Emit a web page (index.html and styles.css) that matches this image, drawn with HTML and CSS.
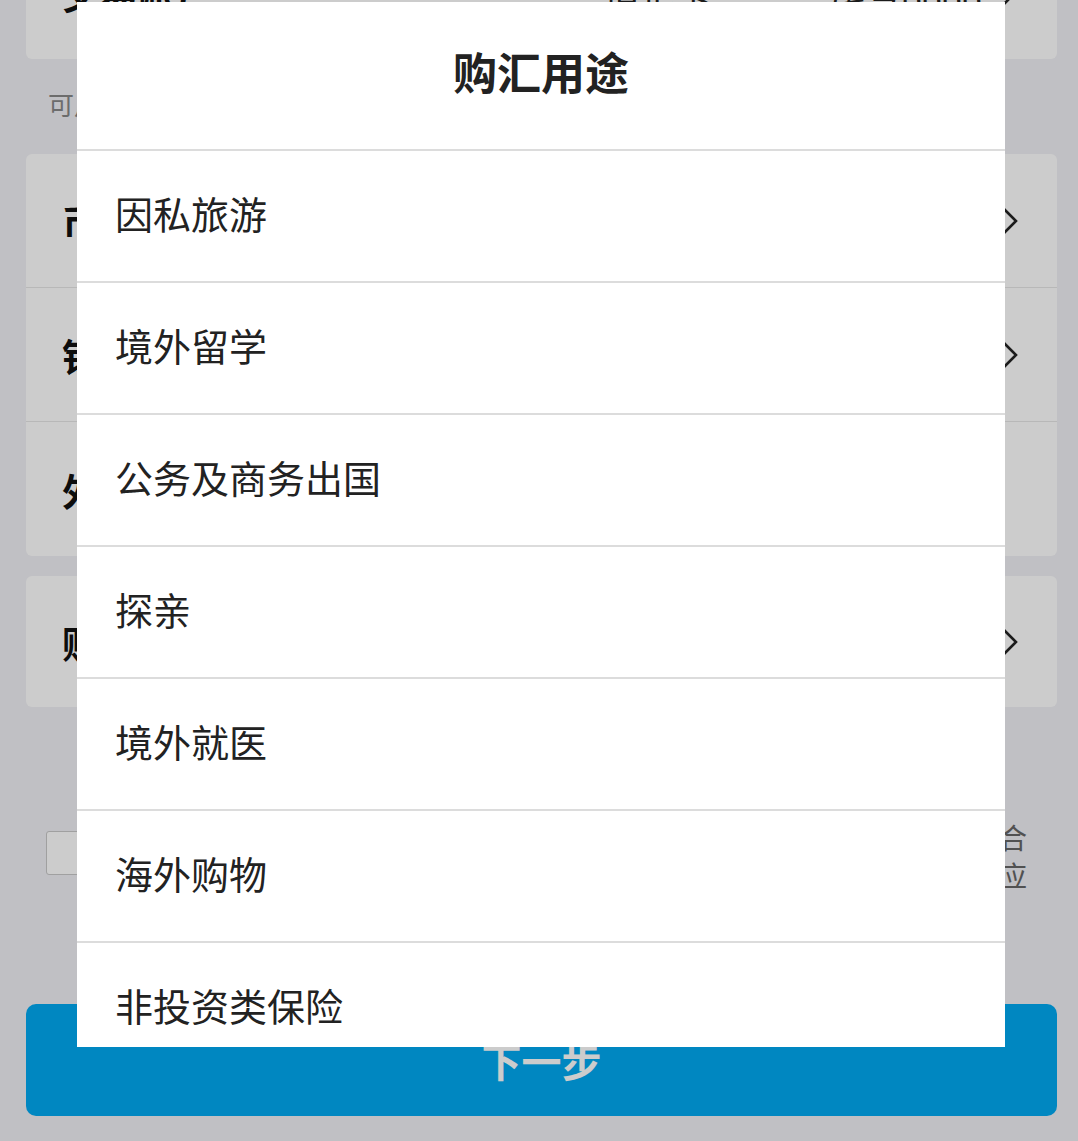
FILE: index.html
```html
<!DOCTYPE html>
<html lang="zh-CN">
<head>
<meta charset="utf-8">
<title>购汇用途</title>
<link rel="stylesheet" href="styles.css">
</head>
<body>
<div class="page">
  <div class="card">
    <div class="row">
      <span class="label">交易账户</span>
      <span class="value"><span class="v1">借记卡</span><span class="v2">尾号8888</span></span>
      <svg class="chev" viewBox="0 0 16 28" width="16" height="28"><polyline points="2,2 14,14 2,26" fill="none" stroke="#222" stroke-width="2.6"/></svg>
    </div>
  </div>
  <div class="hint">可用余额：12,345.67元</div>
  <div class="card">
    <div class="row">
      <span class="label">币种</span>
      <span class="value">美元</span>
      <svg class="chev" viewBox="0 0 16 28" width="16" height="28"><polyline points="2,2 14,14 2,26" fill="none" stroke="#222" stroke-width="2.6"/></svg>
    </div>
    <div class="row">
      <span class="label">钞汇标志</span>
      <span class="value">现钞</span>
      <svg class="chev" viewBox="0 0 16 28" width="16" height="28"><polyline points="2,2 14,14 2,26" fill="none" stroke="#222" stroke-width="2.6"/></svg>
    </div>
    <div class="row">
      <span class="label">外币金额</span>
      <span class="value muted">请输入金额</span>
    </div>
  </div>
  <div class="card card-gap">
    <div class="row row-last">
      <span class="label">购汇用途</span>
      <span class="value muted">请选择</span>
      <svg class="chev" viewBox="0 0 16 28" width="16" height="28"><polyline points="2,2 14,14 2,26" fill="none" stroke="#222" stroke-width="2.6"/></svg>
    </div>
  </div>
  <div class="agree">
    <span class="checkbox"></span>
    <div class="agree-text">
      <span class="line">本人已阅读并知晓《个人购汇申请书》及相关规定，承诺所购外汇符合</span>
      <span class="line">国家外汇管理规定，不用于境外买房、证券投资等项目，并承担相应</span>
    </div>
  </div>
  <button class="next">下一步</button>
</div>

<div class="overlay"></div>

<div class="sheet">
  <div class="sheet-title">购汇用途</div>
  <ul class="options">
    <li class="option">因私旅游</li>
    <li class="option">境外留学</li>
    <li class="option">公务及商务出国</li>
    <li class="option">探亲</li>
    <li class="option">境外就医</li>
    <li class="option">海外购物</li>
    <li class="option">非投资类保险</li>
    <li class="option">其他</li>
  </ul>
</div>
</body>
</html>
```
FILE: styles.css
```css
html, body {
  margin: 0;
  padding: 0;
}
body {
  background: #f0f0f5;
  font-family: "Noto Sans CJK SC", "Noto Sans", sans-serif;
  color: #222;
  width: 1078px;
  height: 1141px;
  overflow: hidden;
}
.page {
  margin-top: -75px;
  padding: 0 21px 0 26px;
}
.card {
  background: #fff;
  border-radius: 6px;
  overflow: hidden;
}
.card-gap {
  margin-top: 20px;
}
.row {
  box-sizing: border-box;
  height: 134px;
  display: flex;
  align-items: center;
  padding: 0 39px 0 36px;
  border-bottom: 1px solid #e6e6e6;
}
.row:last-child {
  border-bottom: none;
}
.row-last {
  height: 131px;
}
.label {
  font-size: 38px;
  font-weight: 700;
  color: #111;
}
.value {
  flex: 1;
  text-align: right;
  font-size: 36px;
  color: #222;
  margin-right: 20px;
  display: flex;
  justify-content: flex-end;
  gap: 118px;
}
.muted {
  color: #999;
}
.chev {
  flex: none;
}
.hint {
  box-sizing: border-box;
  height: 95px;
  padding: 27px 0 0 22px;
  font-size: 26px;
  line-height: 36px;
  color: #888;
}
.agree {
  margin-top: 111px;
  display: flex;
  align-items: flex-start;
  gap: 22px;
  padding-left: 20px;
}
.checkbox {
  flex: none;
  box-sizing: border-box;
  width: 44px;
  height: 44px;
  margin-top: 13px;
  background: #fff;
  border: 1px solid #c8c8c8;
  border-radius: 3px;
}
.agree-text {
  flex: 1;
  margin-right: 30px;
  font-size: 28px;
  line-height: 38px;
  color: #666;
}
.line {
  display: block;
  text-align: justify;
  text-align-last: justify;
  white-space: nowrap;
  overflow: hidden;
}
.next {
  display: block;
  width: 100%;
  height: 112px;
  margin-top: 110px;
  border: none;
  border-radius: 10px;
  background: #00a9f2;
  color: #fff;
  font-family: "Noto Sans CJK SC", "Noto Sans", sans-serif;
  font-size: 40px;
  font-weight: 700;
}
.overlay {
  position: fixed;
  inset: 0;
  background: rgba(0, 0, 0, 0.2);
}
.sheet {
  position: fixed;
  top: 2px;
  left: 77px;
  width: 928px;
  height: 1045px;
  background: #fff;
  overflow: hidden;
}
.sheet-title {
  box-sizing: border-box;
  height: 149px;
  display: flex;
  align-items: center;
  justify-content: center;
  font-size: 44px;
  font-weight: 700;
  color: #222;
  border-bottom: 2px solid #dcdcdc;
  padding-bottom: 10px;
}
.options {
  list-style: none;
  margin: 0;
  padding: 0;
}
.option {
  box-sizing: border-box;
  height: 132px;
  display: flex;
  align-items: center;
  padding: 0 0 8px 38px;
  font-size: 38px;
  color: #222;
  border-bottom: 2px solid #dcdcdc;
}
```
